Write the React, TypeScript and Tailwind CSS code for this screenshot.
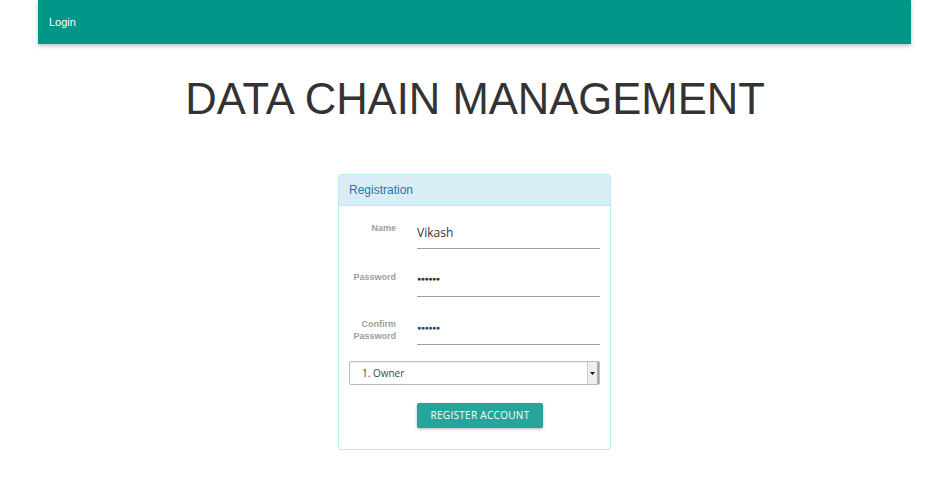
import React from "react";

export default function App() {
  return (
    <div className="w-[942px] h-[480px] bg-white overflow-hidden" style={{ fontFamily: '"Liberation Sans", Arial, sans-serif' }}>
      <nav className="ml-[38px] w-[873px] h-[44px] bg-[#009688] flex items-center px-[11px] shadow-[0_2px_4px_rgba(0,0,0,0.25)]">
        <span className="text-[11px] text-white">Login</span>
      </nav>
      <h1 className="mt-[29px] text-center text-[43.6px] leading-[52px] text-[#333] pl-[8px]">DATA CHAIN MANAGEMENT</h1>
      <div className="mt-[49px] ml-[338px] w-[273px] h-[276px] border border-[#bce8f1] rounded-[3px] flex flex-col">
        <div className="h-[31px] bg-[#d9edf7] border-b border-[#bce8f1] flex items-center px-[10px]">
          <span className="text-[12px] text-[#2f72a8]">Registration</span>
        </div>
        <div className="flex flex-col px-[10px] pt-[16px]">
          <div className="flex">
            <div className="w-[47px] text-right text-[9px] font-bold text-[#9e9e9e] leading-[12px] pt-[0px]">Name</div>
            <div className="ml-[21px] w-[183px] h-[27px] border-b border-[#9e9e9e] flex items-center pb-[5px]">
              <span className="text-[12px] text-[#333]" style={{ fontFamily: '"Open Sans", sans-serif' }}>Vikash</span>
            </div>
          </div>
          <div className="flex mt-[21px]">
            <div className="w-[47px] text-right text-[9px] font-bold text-[#9e9e9e] leading-[12px] pt-[1px]">Password</div>
            <div className="ml-[21px] w-[183px] h-[27px] border-b border-[#9e9e9e] flex items-center pb-[8px]">
              <span className="text-[7px] tracking-[-0.5px] text-[#333]">●●●●●●</span>
            </div>
          </div>
          <div className="flex mt-[21px]">
            <div className="w-[47px] text-right text-[9px] font-bold text-[#9e9e9e] leading-[12px] pt-[0px]">Confirm Password</div>
            <div className="ml-[21px] w-[183px] h-[27px] border-b border-[#9e9e9e] flex items-center pb-[6px]">
              <span className="text-[7px] tracking-[-0.5px] text-[#2c4a7a]">●●●●●●</span>
            </div>
          </div>
          <div className="mt-[16px] w-[251px] h-[24px] border border-[#bbb] rounded-[2px] flex items-stretch shadow-[inset_0_1px_1px_rgba(0,0,0,0.05)]">
            <div className="flex-1 flex items-center pl-[12px] text-[10px] text-[#444]" style={{ fontFamily: '"Open Sans", sans-serif' }}>1. Owner</div>
            <div className="w-[12px] bg-[#eee] border-l border-[#ccc] border-r-2 border-r-[#aaa] flex items-center justify-center">
              <svg width="5" height="3" viewBox="0 0 5 3"><path d="M0 0h5L2.5 3z" fill="#111" /></svg>
            </div>
          </div>
          <div className="mt-[18px] flex justify-center pl-[11px]">
            <button className="w-[126px] h-[25px] bg-[#26a69a] rounded-[2px] text-white text-[10px] tracking-[0.3px] shadow-[0_1px_3px_rgba(0,0,0,0.3)]" style={{ fontFamily: '"Open Sans", sans-serif' }}>REGISTER ACCOUNT</button>
          </div>
        </div>
      </div>
    </div>
  );
}
